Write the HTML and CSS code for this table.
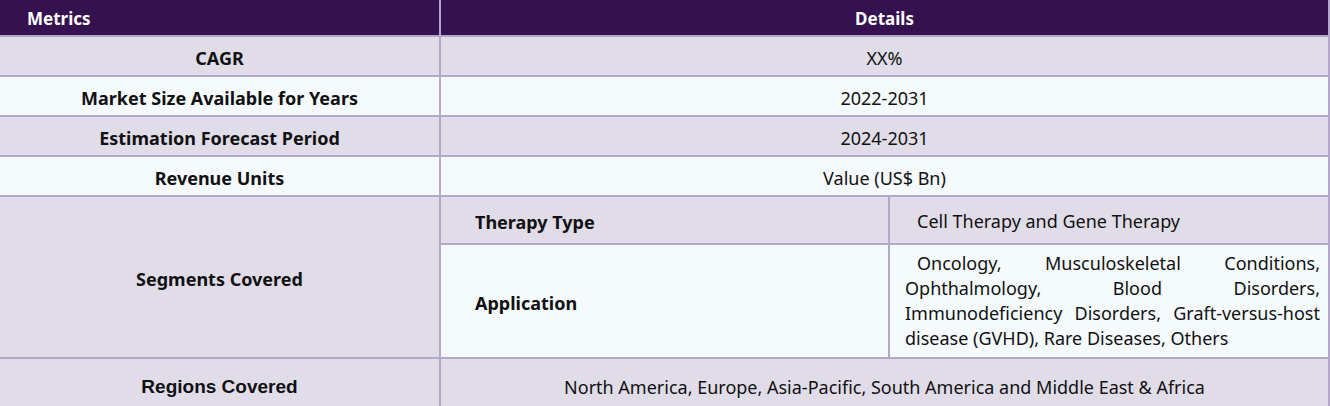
FILE: index.html
```html
<!DOCTYPE html>
<html lang="en">
<head>
<meta charset="utf-8">
<title>Metrics</title>
<link rel="stylesheet" href="styles.css">
</head>
<body>
<table class="metrics">
  <colgroup><col class="col-metric"><col class="col-detail"></colgroup>
  <thead>
    <tr><th class="th-left">Metrics</th><th class="th-center">Details</th></tr>
  </thead>
  <tbody>
    <tr class="row alt"><td class="label">CAGR</td><td class="value">XX%</td></tr>
    <tr class="row light"><td class="label">Market Size Available for Years</td><td class="value">2022-2031</td></tr>
    <tr class="row alt"><td class="label">Estimation Forecast Period</td><td class="value">2024-2031</td></tr>
    <tr class="row light"><td class="label">Revenue Units</td><td class="value">Value (US$ Bn)</td></tr>
    <tr class="row alt segrow">
      <td class="label">Segments Covered</td>
      <td class="nested-cell">
        <table class="inner">
          <colgroup><col class="col-sub"><col class="col-subval"></colgroup>
          <tr class="sub-top alt"><td class="sublabel">Therapy Type</td><td class="subvalue"><p>Cell Therapy and Gene Therapy</p></td></tr>
          <tr class="sub-bottom light"><td class="sublabel">Application</td><td class="subvalue"><p>Oncology, Musculoskeletal Conditions, Ophthalmology, Blood Disorders, Immunodeficiency Disorders, Graft-versus-host disease (GVHD), Rare Diseases, Others</p></td></tr>
        </table>
      </td>
    </tr>
    <tr class="row alt last"><td class="label narrow">Regions Covered</td><td class="value">North America, Europe, Asia-Pacific, South America and Middle East &amp; Africa</td></tr>
  </tbody>
</table>
</body>
</html>
```
FILE: styles.css
```css
html, body {
  margin: 0;
  padding: 0;
  background: #ffffff;
}
body {
  font-family: "Noto Sans", "Open Sans", sans-serif;
  font-size: 18px;
  color: #111111;
}
.metrics {
  width: 1330px;
  border-collapse: separate;
  border-spacing: 0;
  table-layout: fixed;
}
.col-metric { width: 441px; }
.col-detail { width: 889px; }
.metrics th, .metrics td {
  border-right: 2px solid #b3a8cc;
  border-bottom: 2px solid #b3a8cc;
  padding: 0;
  box-sizing: border-box;
}
.metrics thead th {
  background: #361150;
  color: #ffffff;
  font-weight: 700;
  font-size: 17px;
  height: 37px;
  line-height: 20px;
  padding-top: 2px;
}
.metrics th.th-left { text-align: left; padding-left: 27px; }
.th-center { text-align: center; }
.alt { background: #e0dde9; }
.light { background: #f5fafd; }
.row > td { height: 40px; text-align: center; vertical-align: middle; line-height: 22px; padding-top: 3px; }
.label { font-weight: 700; }
.narrow { font-family: "Liberation Sans Narrow", "Liberation Sans", sans-serif; font-size: 19px; }
.segrow > td { height: 162px; }
.metrics .last > td { height: 58px; padding-top: 0; }
.metrics td.nested-cell { padding: 0; vertical-align: top; }
.inner {
  width: 100%;
  border-collapse: separate;
  border-spacing: 0;
  table-layout: fixed;
}
.col-sub { width: 449px; }
.inner td {
  border: none;
  padding: 0;
  vertical-align: middle;
  box-sizing: content-box;
}
.inner .sublabel {
  border-right: 2px solid #b3a8cc;
  padding-left: 34px;
  padding-top: 3px;
  font-weight: 700;
  text-align: left;
}
.sub-top td { height: 43px; border-bottom: 2px solid #b3a8cc; }
.sub-bottom td { height: 109px; }
.inner td.subvalue { padding: 2px 8px 0 15px; }
.inner .sub-bottom td.subvalue { padding-top: 0; }
.subvalue p {
  margin: 0;
  text-align: justify;
  text-indent: 12px;
  line-height: 25px;
}
```
